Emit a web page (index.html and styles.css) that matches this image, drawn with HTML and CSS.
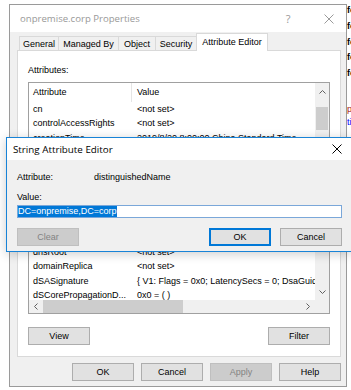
FILE: index.html
```html
<!DOCTYPE html>
<html lang="en">
<head>
    <meta charset="UTF-8">
    <meta name="viewport" content="width=device-width, initial-scale=1.0">
    <title>onpremise.corp Properties</title>
    <link rel="stylesheet" href="styles.css">
</head>
<body>

    <div class="desk">
        <!-- Properties window (inactive) -->
        <div class="win">
            <div class="win-title">
                <span class="win-title-text">onpremise.corp Properties</span>
                <span class="win-help">?</span>
                <span class="win-close">
                    <svg width="10" height="10" viewBox="0 0 10 10"><path d="M0.5 0.5L9.5 9.5M9.5 0.5L0.5 9.5" stroke="#9a9a9a" stroke-width="1"/></svg>
                </span>
            </div>
            <div class="win-body">
                <div class="tabs">
                    <div class="tab tab-general">General</div>
                    <div class="tab tab-managed">Managed By</div>
                    <div class="tab tab-object">Object</div>
                    <div class="tab tab-security">Security</div>
                    <div class="tab tab-attr selected">Attribute Editor</div>
                </div>

                <div class="panel">
                    <div class="panel-label">Attributes:</div>
                    <div class="listview">
                        <div class="lv-main">
                            <div class="lv-rows">
                                <div class="lv-head"><span class="c1">Attribute</span><span class="c2">Value</span></div>
                                <div class="lv-row"><span class="c1">cn</span><span class="c2">&lt;not set&gt;</span></div>
                                <div class="lv-row"><span class="c1">controlAccessRights</span><span class="c2">&lt;not set&gt;</span></div>
                                <div class="lv-row"><span class="c1">creationTime</span><span class="c2">2019/8/20 8:00:00 China Standard Time</span></div>
                                <div class="lv-row"><span class="c1">dc</span><span class="c2">onpremise</span></div>
                                <div class="lv-row"><span class="c1">defaultLocalPolicyObject</span><span class="c2">&lt;not set&gt;</span></div>
                                <div class="lv-row"><span class="c1">description</span><span class="c2">&lt;not set&gt;</span></div>
                                <div class="lv-row"><span class="c1">desktopProfile</span><span class="c2">&lt;not set&gt;</span></div>
                                <div class="lv-row"><span class="c1">displayName</span><span class="c2">&lt;not set&gt;</span></div>
                                <div class="lv-row"><span class="c1">displayNamePrintable</span><span class="c2">&lt;not set&gt;</span></div>
                                <div class="lv-row"><span class="c1">distinguishedName</span><span class="c2">DC=onpremise,DC=corp</span></div>
                                <div class="lv-row"><span class="c1">dnsRoot</span><span class="c2">&lt;not set&gt;</span></div>
                                <div class="lv-row"><span class="c1">domainReplica</span><span class="c2">&lt;not set&gt;</span></div>
                                <div class="lv-row"><span class="c1">dSASignature</span><span class="c2">{ V1: Flags = 0x0; LatencySecs = 0; DsaGuid: ... }</span></div>
                                <div class="lv-row"><span class="c1">dSCorePropagationD...</span><span class="c2">0x0 = ( )</span></div>
                            </div>
                            <div class="vscroll">
                                <div class="sb-btn">
                                    <svg width="7" height="4" viewBox="0 0 7 4"><path d="M0.5 3.5L3.5 0.5L6.5 3.5" fill="none" stroke="#606060"/></svg>
                                </div>
                                <div class="vs-track"><div class="vs-thumb"></div></div>
                                <div class="sb-btn">
                                    <svg width="7" height="4" viewBox="0 0 7 4"><path d="M0.5 0.5L3.5 3.5L6.5 0.5" fill="none" stroke="#606060"/></svg>
                                </div>
                            </div>
                        </div>
                        <div class="hscroll-row">
                            <div class="hscroll">
                                <div class="hs-btn">
                                    <svg width="4" height="7" viewBox="0 0 4 7"><path d="M3.5 0.5L0.5 3.5L3.5 6.5" fill="none" stroke="#606060"/></svg>
                                </div>
                                <div class="hs-track"><div class="hs-thumb"></div></div>
                                <div class="hs-btn">
                                    <svg width="4" height="7" viewBox="0 0 4 7"><path d="M0.5 0.5L3.5 3.5L0.5 6.5" fill="none" stroke="#606060"/></svg>
                                </div>
                            </div>
                            <div class="corner"></div>
                        </div>
                    </div>
                    <div class="panel-buttons">
                        <button class="btn">View</button>
                        <button class="btn">Filter</button>
                    </div>
                </div>

                <div class="win-buttons">
                    <button class="btn">OK</button>
                    <button class="btn">Cancel</button>
                    <button class="btn btn-disabled">Apply</button>
                    <button class="btn">Help</button>
                </div>
            </div>
        </div>

        <!-- text of the window behind -->
        <div class="behind">
            <div class="behind-lines">
                <div>fo</div>
                <div>fo</div>
                <div>fo</div>
                <div>fo</div>
                <div>fo</div>
            </div>
            <div class="behind-code">
                <div class="red">pr</div>
                <div class="blue">ti</div>
            </div>
        </div>
    </div>

    <!-- String Attribute Editor (active dialog on top) -->
    <div class="dialog">
        <div class="dlg-title">
            <span>String Attribute Editor</span>
            <span class="dlg-close">
                <svg width="10" height="10" viewBox="0 0 10 10"><path d="M0.5 0.5L9.5 9.5M9.5 0.5L0.5 9.5" stroke="#000" stroke-width="1"/></svg>
            </span>
        </div>
        <div class="dlg-body">
            <div class="dlg-field">
                <span class="dlg-label">Attribute:</span>
                <span>distinguishedName</span>
            </div>
            <div class="dlg-value-label">Value:</div>
            <div class="textbox"><span class="selected-text">DC=onpremise,DC=corp</span></div>
            <div class="dlg-buttons">
                <button class="btn btn-disabled">Clear</button>
                <button class="btn btn-default">OK</button>
                <button class="btn">Cancel</button>
            </div>
        </div>
    </div>

</body>
</html>
```

FILE: styles.css
```css
* {
    margin: 0;
    padding: 0;
    box-sizing: border-box;
}

body {
    width: 351px;
    height: 390px;
    overflow: hidden;
    position: relative;
    background: #fff;
    font-family: "Liberation Sans", Arial, sans-serif;
    font-size: 9px;
    color: #000;
}

button {
    font: inherit;
    color: inherit;
}

.desk {
    display: flex;
    align-items: flex-start;
    padding: 4px 0 0 9px;
}

/* Properties window */
.win {
    flex: none;
    width: 338px;
    height: 383px;
    border: 1px solid #9a9a9a;
    background: #f0f0f0;
    display: flex;
    flex-direction: column;
}

.win-title {
    height: 27px;
    flex: none;
    background: #fff;
    display: flex;
    align-items: center;
    padding: 0 12px 0 10px;
    font-family: "Open Sans", sans-serif;
    font-size: 9.6px;
    color: #999;
}

.win-help {
    margin-left: auto;
    width: 10px;
    text-align: center;
    font-size: 11px;
}

.win-close {
    margin-left: 31px;
    display: flex;
}

.win-body {
    flex: 1;
    display: flex;
    flex-direction: column;
}

/* Tabs */
.tabs {
    height: 18px;
    display: flex;
    align-items: flex-end;
    padding-left: 9px;
}

.tab {
    height: 14px;
    border: 1px solid #d9d9d9;
    border-bottom: none;
    margin-right: -1px;
    background: #f0f0f0;
    display: flex;
    align-items: center;
    justify-content: center;
}

.tab-general { width: 40px; }
.tab-managed { width: 61px; }
.tab-object { width: 38px; }
.tab-security { width: 42px; }
.tab-attr { width: 72px; }

.tab.selected {
    height: 18px;
    margin-bottom: -1px;
    background: #fff;
    position: relative;
    z-index: 1;
    padding-bottom: 2px;
}

.panel {
    margin: 0 5px 0 7px;
    border: 1px solid #d9d9d9;
    background: #fff;
    padding: 13px 10px 11px;
}

.panel-label {
    line-height: 12px;
}

/* List view */
.listview {
    margin-top: 6px;
    height: 232px;
    border: 1px solid #a0a0a0;
    display: flex;
    flex-direction: column;
}

.lv-main {
    height: 217px;
    display: flex;
}

.lv-rows {
    flex: 1;
    overflow: hidden;
}

.lv-head {
    height: 19px;
    line-height: 19px;
    display: flex;
    white-space: nowrap;
}

.lv-head .c1 {
    border-right: 1px solid #e5e5e5;
}

.lv-row {
    height: 14.3px;
    line-height: 14.3px;
    display: flex;
    white-space: nowrap;
}

.c1 {
    flex: none;
    width: 103px;
    padding-left: 4px;
    overflow: hidden;
}

.c2 {
    padding-left: 5px;
}

.vscroll {
    width: 14px;
    flex: none;
    background: #f0f0f0;
    display: flex;
    flex-direction: column;
}

.sb-btn {
    height: 17px;
    display: flex;
    align-items: center;
    justify-content: center;
}

.vs-track {
    flex: 1;
}

.vs-thumb {
    margin: 7px 1px 0;
    height: 23px;
    background: #cdcdcd;
}

.hscroll-row {
    height: 13px;
    display: flex;
}

.hscroll {
    flex: 1;
    display: flex;
    background: #f0f0f0;
}

.hs-btn {
    width: 14px;
    display: flex;
    align-items: center;
    justify-content: center;
}

.hs-track {
    flex: 1;
}

.hs-thumb {
    width: 140px;
    height: 100%;
    background: #cdcdcd;
}

.corner {
    width: 14px;
    background: #f0f0f0;
}

/* Buttons */
.btn {
    width: 62px;
    height: 18px;
    border: 1px solid #adadad;
    background: #e1e1e1;
    display: flex;
    align-items: center;
    justify-content: center;
}

.btn-disabled {
    background: #cccccc;
    border-color: #bfbfbf;
    color: #838383;
}

.btn-default {
    border-color: #0078d7;
    box-shadow: inset 0 0 0 1px #0078d7;
}

.panel-buttons {
    display: flex;
    justify-content: space-between;
    margin-top: 13px;
}

.win-buttons {
    display: flex;
    justify-content: flex-end;
    gap: 7px;
    padding: 6px 5px 0 0;
}

/* Window behind */
.behind {
    margin-top: -1px;
    font-size: 9px;
    font-weight: bold;
    white-space: nowrap;
}

.behind-lines {
    line-height: 15.8px;
}

.behind-code {
    margin-top: 21px;
    line-height: 13px;
    font-weight: normal;
}

.red { color: #a31515; }
.blue { color: #0000ff; }

/* String Attribute Editor dialog */
.dialog {
    position: absolute;
    left: 6px;
    top: 137px;
    width: 346px;
    border: 1px solid #1883d7;
    background: #f0f0f0;
    box-shadow: 0 2px 10px rgba(0, 0, 0, 0.2);
}

.dlg-title {
    height: 22px;
    background: #fff;
    display: flex;
    align-items: center;
    padding: 0 9px 0 6px;
    font-family: "Open Sans", sans-serif;
    font-size: 9.8px;
}

.dlg-close {
    margin-left: auto;
    display: flex;
}

.dlg-body {
    padding: 11px 9px 5px 10px;
}

.dlg-field {
    display: flex;
    line-height: 12px;
}

.dlg-label {
    width: 77px;
}

.dlg-value-label {
    margin-top: 8px;
    line-height: 12px;
}

.textbox {
    margin-top: 2px;
    height: 13px;
    border: 1px solid #7aa7d9;
    background: #fff;
    display: flex;
    align-items: center;
}

.selected-text {
    background: #0078d7;
    color: #fff;
    line-height: 11px;
}

.dlg-buttons {
    display: flex;
    gap: 9px;
    margin-top: 10px;
}

.dlg-buttons .btn-default {
    margin-left: auto;
}
```
